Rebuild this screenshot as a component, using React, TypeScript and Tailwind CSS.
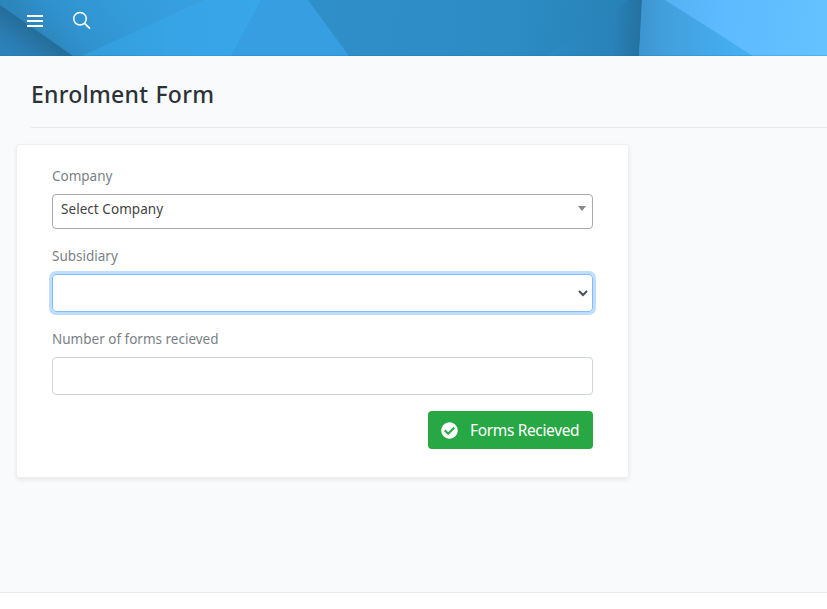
import type { ReactNode } from 'react';

function HeaderArt() {
  return (
    <svg className="absolute inset-0 h-full w-full" viewBox="0 0 827 56" preserveAspectRatio="none" aria-hidden="true">
      <defs>
        <linearGradient id="base" gradientUnits="userSpaceOnUse" x1="35" y1="30" x2="130" y2="-50">
          <stop offset="0" stopColor="#2d86bb" />
          <stop offset="0.25" stopColor="#3093cf" />
          <stop offset="0.65" stopColor="#349bd9" />
          <stop offset="1" stopColor="#379fdf" />
        </linearGradient>
        <linearGradient id="corner" gradientUnits="userSpaceOnUse" x1="36" y1="29" x2="5" y2="73">
          <stop offset="0" stopColor="#256c98" />
          <stop offset="0.45" stopColor="#2a7db2" />
          <stop offset="1" stopColor="#2d89c5" />
        </linearGradient>
        <linearGradient id="bright" x1="0" y1="0" x2="1" y2="0">
          <stop offset="0" stopColor="#349dda" />
          <stop offset="0.5" stopColor="#36a4e5" />
          <stop offset="1" stopColor="#38a7ea" />
        </linearGradient>
        <linearGradient id="deep" gradientUnits="userSpaceOnUse" x1="310" y1="0" x2="640" y2="40">
          <stop offset="0" stopColor="#2f8fc8" />
          <stop offset="0.6" stopColor="#2d8cc4" />
          <stop offset="1" stopColor="#2780b5" />
        </linearGradient>
        <linearGradient id="fold" gradientUnits="userSpaceOnUse" x1="550" y1="30" x2="641" y2="33">
          <stop offset="0" stopColor="#2d8ac3" />
          <stop offset="0.7" stopColor="#2982b9" />
          <stop offset="1" stopColor="#2371a0" />
        </linearGradient>
        <linearGradient id="mid" gradientUnits="userSpaceOnUse" x1="640" y1="0" x2="750" y2="0">
          <stop offset="0" stopColor="#3e94cf" />
          <stop offset="0.25" stopColor="#43a0dd" />
          <stop offset="1" stopColor="#45b0f4" />
        </linearGradient>
        <linearGradient id="light" gradientUnits="userSpaceOnUse" x1="665" y1="0" x2="827" y2="20">
          <stop offset="0" stopColor="#54b2f4" />
          <stop offset="0.4" stopColor="#5dbbff" />
          <stop offset="1" stopColor="#64c2ff" />
        </linearGradient>
      </defs>
      <rect width="827" height="56" fill="url(#base)" />
      <path d="M0 5 L73 56 H0Z" fill="url(#corner)" />
      <path d="M82 56 L204 0 H261 L231 56Z" fill="url(#bright)" />
      <path d="M261 0 H308 L349 56 H231Z" fill="#379fe1" />
      <path d="M308 0 H642 L639 56 H349Z" fill="url(#deep)" />
      <path d="M548 56 L628 0 H642 L639 56Z" fill="url(#fold)" />
      <path d="M642 0 H827 V56 H639Z" fill="url(#mid)" />
      <path d="M665 0 H827 V56 H753Z" fill="url(#light)" />
      <rect y="55" width="827" height="1" fill="#1668a0" fillOpacity="0.2" />
    </svg>
  );
}

function Label({ children }: { children: ReactNode }) {
  return <div className="h-[21px] text-[13.5px] leading-[21px] text-[#7a8186]">{children}</div>;
}

export default function App() {
  return (
    <div className="flex h-[609px] w-full flex-col overflow-hidden bg-[#f9fafc] font-['Noto_Sans','Open_Sans',sans-serif]">
      <header className="relative h-14 shrink-0">
        <HeaderArt />
        <div className="relative flex pl-[27px]">
          <button aria-label="Menu" className="mt-[15px] flex h-3 w-4 flex-col justify-between">
            <span className="h-0.5 w-full bg-white" />
            <span className="h-0.5 w-full bg-white" />
            <span className="h-0.5 w-full bg-white" />
          </button>
          <button aria-label="Search" className="mt-[11px] ml-[29px] h-[19px] w-[19px]">
            <svg viewBox="0 0 19 19" className="h-full w-full" fill="none" stroke="white">
              <circle cx="8" cy="7.7" r="6.3" strokeWidth="1.5" />
              <path d="M12.3 12.1 L18 17.6" strokeWidth="1.8" />
            </svg>
          </button>
        </div>
      </header>

      <main className="flex-1">
        <div className="ml-[31px] h-[72px] border-b border-[#e5e7e9] pt-[21px]">
          <h1 className="text-[23px] leading-[35px] font-medium text-[#2c3237]">
            <span className="tracking-[0.25px] [word-spacing:1px]">Enrolment Form</span>
          </h1>
        </div>
        <section className="mt-4 ml-4 h-[334px] w-[613px] rounded-[3px] border border-[#efefef] bg-white pt-[21px] pr-[35px] pl-[35px] shadow-[0_2px_4px_rgba(0,0,0,0.07)]">
          <Label>Company</Label>
          <div className="mt-[7px] flex h-[35px] justify-between rounded border border-[#aaa] pr-[6px] pl-2 text-[13.5px] leading-[29px] text-[#444]">
            <span className="tracking-[0.05px]">Select Company</span>
            <span className="mt-[11px] h-0 w-0 border-x-4 border-t-[5px] border-x-transparent border-t-[#888]" />
          </div>
          <div className="mt-[17px]">
            <Label>Subsidiary</Label>
          </div>
          <div className="mt-[7px] flex h-[38px] items-center justify-end rounded border border-[#80bdff] pr-[4px] shadow-[0_0_0_3px_#bfdeff]">
            <svg viewBox="0 0 10 8" className="h-2 w-[10px]" fill="none" stroke="#495057" strokeWidth="2">
              <path d="M1 2 L5 6 L9 2" />
            </svg>
          </div>
          <div className="mt-[17px]">
            <Label>Number of forms recieved</Label>
          </div>
          <input aria-label="Number of forms recieved" className="mt-[7px] block h-[38px] w-full rounded border border-[#ced4da] bg-white px-3" />
          <div className="mt-4 flex justify-end">
            <button className="flex h-[38px] w-[165px] items-center rounded bg-[#28a745] pl-[13px] text-[15.5px] text-white">
              <svg viewBox="0 0 512 512" className="mr-[12px] h-[17px] w-[17px] shrink-0" fill="currentColor">
                <path d="M504 256c0 137-111 248-248 248S8 393 8 256 119 8 256 8s248 111 248 248zM227 387l184-184c6-6 6-16 0-22l-22-23c-7-6-17-6-23 0L216 308l-70-70c-6-6-16-6-23 0l-22 23c-6 6-6 16 0 22l104 104c6 6 16 6 22 0z" />
              </svg>
              <span className="mt-px tracking-[-0.35px] whitespace-nowrap">Forms Recieved</span>
            </button>
          </div>
        </section>
      </main>

      <footer className="h-[17px] shrink-0 border-t border-[#ebebeb] bg-white" />
    </div>
  );
}
